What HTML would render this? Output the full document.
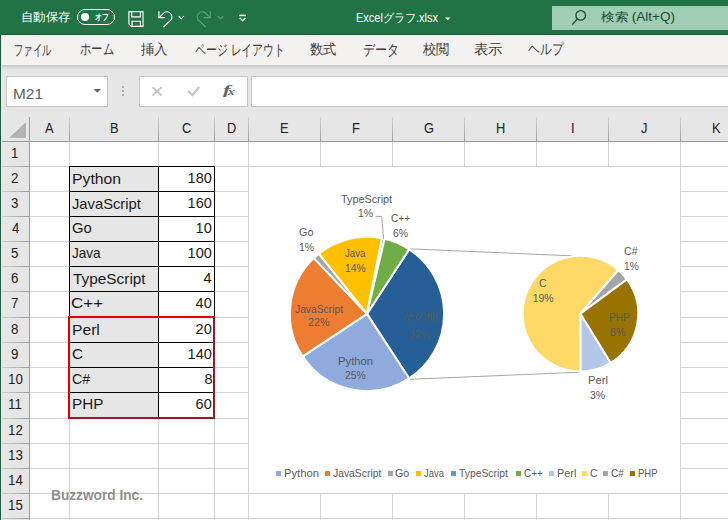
<!DOCTYPE html><html lang="ja"><head><meta charset="utf-8"><style>
*{margin:0;padding:0;box-sizing:border-box}
html,body{width:728px;height:520px;overflow:hidden;background:#fff;font-family:"Liberation Sans",sans-serif}
.a{position:absolute;white-space:nowrap}
</style></head><body>
<div class="a" style="left:0;top:0;width:728px;height:34px;background:#217346"></div>
<div class="a" style="left:20.52px;top:10.80px;font-size:12px;font-weight:normal;font-style:normal;font-family:'Liberation Sans',sans-serif;color:#fff;line-height:1;transform:scaleX(1.0400);transform-origin:0 0;">自動保存</div>
<div class="a" style="left:77px;top:9.2px;width:38px;height:15.6px;border:1.2px solid #fff;border-radius:8px"></div>
<div class="a" style="left:80.8px;top:12.7px;width:8.6px;height:8.6px;background:#fff;border-radius:50%"></div>
<div class="a" style="left:95.04px;top:13.40px;font-size:9px;font-weight:bold;font-style:normal;font-family:'Liberation Sans',sans-serif;color:#fff;line-height:1;transform:scaleX(0.7625);transform-origin:0 0;">オフ</div>
<svg class="a" style="left:0;top:0" width="728" height="35" viewBox="0 0 728 35">
<g fill="none" stroke="#fff" stroke-width="1.15" stroke-linejoin="miter">
<path d="M128.9 11.6 H143 V26.4 H131.3 L128.9 24 Z"/>
<path d="M131.7 11.6 V16.9 H140.4 V11.6"/>
<path d="M132 26.4 V21.2 H140.4 V26.4"/>
<path d="M158.9 11.2 V17.6 H165.3"/>
<path d="M158.9 17.6 L163.6 13.1 A5 5 0 0 1 170.7 20.1 L163.4 27"/>
<path d="M178.7 16.2 L181.3 18.8 L183.9 16.2"/>
</g>
<g fill="none" stroke="#5fa07b" stroke-width="1.15">
<path d="M210.2 11.2 V17.6 H203.8"/>
<path d="M210.2 17.6 L205.5 13.1 A5 5 0 0 0 198.4 20.1 L205.7 27"/>
<path d="M217.7 16.2 L220.5 18.8 L223.3 16.2"/>
</g>
<g fill="none" stroke="#fff" stroke-width="1.5">
<path d="M239 15.4 h7"/><path d="M239.7 18 l2.9 2.6 l2.9 -2.6"/>
</g>
<path d="M445 17.5 h5.5 l-2.75 2.8 z" fill="#fff"/>
</svg>
<div class="a" style="left:355.88px;top:11.50px;font-size:12px;font-weight:normal;font-style:normal;font-family:'Liberation Sans',sans-serif;color:#fff;line-height:1;transform:scaleX(0.9182);transform-origin:0 0;">Excelグラフ.xlsx</div>
<div class="a" style="left:552px;top:6px;width:176px;height:24px;background:#a0cdb3"></div>
<svg class="a" style="left:552px;top:6px" width="40" height="24"><g fill="none" stroke="#1d4f33" stroke-width="1.3"><circle cx="28.7" cy="9.4" r="4.8"/><path d="M25.3 13 L20.3 18.5"/></g></svg>
<div class="a" style="left:601.17px;top:10.80px;font-size:12px;font-weight:normal;font-style:normal;font-family:'Liberation Sans',sans-serif;color:#1e4a32;line-height:1;transform:scaleX(1.1250);transform-origin:0 0;">検索 (Alt+Q)</div>
<div class="a" style="left:0;top:34px;width:728px;height:31px;background:#f3f2f1"></div>
<div class="a" style="left:0;top:34px;width:728px;height:1px;background:#22583e"></div>
<div class="a" style="left:0;top:35px;width:728px;height:1px;background:#e6f5ec"></div>
<div class="a" style="left:0;top:65px;width:728px;height:455px;background:#e6e6e6"></div>
<div class="a" style="left:0;top:65px;width:728px;height:5px;background:linear-gradient(#cbcbcb,#e6e6e6)"></div>
<div class="a" style="left:14.05px;top:43.40px;font-size:14.5px;font-weight:normal;font-style:normal;font-family:'Liberation Sans',sans-serif;color:#3b3b3b;line-height:1;transform:scaleX(0.6241);transform-origin:0 0;">ファイル</div>
<div class="a" style="left:80.24px;top:42.40px;font-size:14.5px;font-weight:normal;font-style:normal;font-family:'Liberation Sans',sans-serif;color:#3b3b3b;line-height:1;transform:scaleX(0.7558);transform-origin:0 0;">ホーム</div>
<div class="a" style="left:141.00px;top:43.40px;font-size:13.5px;font-weight:normal;font-style:normal;font-family:'Liberation Sans',sans-serif;color:#3b3b3b;line-height:1;transform:scaleX(0.9630);transform-origin:0 0;">挿入</div>
<div class="a" style="left:194.88px;top:43.40px;font-size:14.5px;font-weight:normal;font-style:normal;font-family:'Liberation Sans',sans-serif;color:#3b3b3b;line-height:1;transform:scaleX(0.7244);transform-origin:0 0;">ページ レイアウト</div>
<div class="a" style="left:310.45px;top:43.40px;font-size:13.5px;font-weight:normal;font-style:normal;font-family:'Liberation Sans',sans-serif;color:#3b3b3b;line-height:1;transform:scaleX(0.9462);transform-origin:0 0;">数式</div>
<div class="a" style="left:362.59px;top:43.40px;font-size:14.5px;font-weight:normal;font-style:normal;font-family:'Liberation Sans',sans-serif;color:#3b3b3b;line-height:1;transform:scaleX(0.8025);transform-origin:0 0;">データ</div>
<div class="a" style="left:423.00px;top:43.40px;font-size:13.5px;font-weight:normal;font-style:normal;font-family:'Liberation Sans',sans-serif;color:#3b3b3b;line-height:1;transform:scaleX(0.9481);transform-origin:0 0;">校閲</div>
<div class="a" style="left:474.37px;top:43.40px;font-size:13.5px;font-weight:normal;font-style:normal;font-family:'Liberation Sans',sans-serif;color:#3b3b3b;line-height:1;transform:scaleX(1.0308);transform-origin:0 0;">表示</div>
<div class="a" style="left:528.21px;top:42.40px;font-size:14.5px;font-weight:normal;font-style:normal;font-family:'Liberation Sans',sans-serif;color:#3b3b3b;line-height:1;transform:scaleX(0.7857);transform-origin:0 0;">ヘルプ</div>
<div class="a" style="left:6px;top:76px;width:101.5px;height:31px;background:#fff;border:1px solid #c6c6c6"></div>
<div class="a" style="left:13.00px;top:85.80px;font-size:15.4px;font-weight:normal;font-style:normal;font-family:'Liberation Sans',sans-serif;color:#606060;line-height:1;">M21</div>
<svg class="a" style="left:92px;top:88px" width="10" height="6"><path d="M1.5 1 h7.5 l-3.75 3.8 z" fill="#666"/></svg>
<svg class="a" style="left:120px;top:83px" width="6" height="18"><g fill="#9a9a9a"><circle cx="3" cy="4" r="1"/><circle cx="3" cy="8" r="1"/><circle cx="3" cy="12" r="1"/></g></svg>
<div class="a" style="left:138.5px;top:76px;width:109px;height:31px;background:#fff;border:1px solid #c6c6c6"></div>
<svg class="a" style="left:138px;top:76px" width="110" height="30"><g fill="none" stroke="#c4c4c4" stroke-width="1.9"><path d="M14.6 11.2 l9 8.4 M23.6 11.2 l-9 8.4"/><path d="M50 15 L54.3 19.2 L61.2 11" stroke-width="2.2"/></g>
</svg>
<div class="a" style="left:223.20px;top:84.20px;font-size:12.8px;font-weight:bold;font-style:italic;font-family:'Liberation Serif',serif;color:#666;line-height:1;transform:scaleX(1.7600);transform-origin:0 0;">f</div>
<div class="a" style="left:228.40px;top:87.40px;font-size:10.5px;font-weight:bold;font-style:italic;font-family:'Liberation Serif',serif;color:#666;line-height:1;transform:scaleX(1.2600);transform-origin:0 0;">x</div>
<div class="a" style="left:251px;top:76px;width:480px;height:31px;background:#fff;border:1px solid #c6c6c6"></div>
<div class="a" style="left:29.5px;top:141.5px;width:700px;height:380px;background:#fff"></div>
<div class="a" style="left:69px;top:117px;width:1px;height:24px;background:linear-gradient(#d2d2d2,#9e9e9e)"></div>
<div class="a" style="left:69px;top:142px;width:1px;height:380px;background:#d4d4d4"></div>
<div class="a" style="left:45.30px;top:119.50px;font-size:15.3px;font-weight:normal;font-style:normal;font-family:'Liberation Sans',sans-serif;color:#222;line-height:1;transform:scaleX(0.8400);transform-origin:0 0;">A</div>
<div class="a" style="left:158px;top:117px;width:1px;height:24px;background:linear-gradient(#d2d2d2,#9e9e9e)"></div>
<div class="a" style="left:158px;top:142px;width:1px;height:380px;background:#d4d4d4"></div>
<div class="a" style="left:109.80px;top:119.50px;font-size:15.3px;font-weight:normal;font-style:normal;font-family:'Liberation Sans',sans-serif;color:#222;line-height:1;transform:scaleX(0.8400);transform-origin:0 0;">B</div>
<div class="a" style="left:214px;top:117px;width:1px;height:24px;background:linear-gradient(#d2d2d2,#9e9e9e)"></div>
<div class="a" style="left:214px;top:142px;width:1px;height:380px;background:#d4d4d4"></div>
<div class="a" style="left:181.88px;top:119.50px;font-size:15.3px;font-weight:normal;font-style:normal;font-family:'Liberation Sans',sans-serif;color:#222;line-height:1;transform:scaleX(0.8400);transform-origin:0 0;">C</div>
<div class="a" style="left:248px;top:117px;width:1px;height:24px;background:linear-gradient(#d2d2d2,#9e9e9e)"></div>
<div class="a" style="left:248px;top:142px;width:1px;height:380px;background:#d4d4d4"></div>
<div class="a" style="left:226.88px;top:119.50px;font-size:15.3px;font-weight:normal;font-style:normal;font-family:'Liberation Sans',sans-serif;color:#222;line-height:1;transform:scaleX(0.8400);transform-origin:0 0;">D</div>
<div class="a" style="left:320px;top:117px;width:1px;height:24px;background:linear-gradient(#d2d2d2,#9e9e9e)"></div>
<div class="a" style="left:320px;top:142px;width:1px;height:380px;background:#d4d4d4"></div>
<div class="a" style="left:279.90px;top:119.50px;font-size:15.3px;font-weight:normal;font-style:normal;font-family:'Liberation Sans',sans-serif;color:#222;line-height:1;transform:scaleX(0.8400);transform-origin:0 0;">E</div>
<div class="a" style="left:392px;top:117px;width:1px;height:24px;background:linear-gradient(#d2d2d2,#9e9e9e)"></div>
<div class="a" style="left:392px;top:142px;width:1px;height:380px;background:#d4d4d4"></div>
<div class="a" style="left:352.38px;top:119.50px;font-size:15.3px;font-weight:normal;font-style:normal;font-family:'Liberation Sans',sans-serif;color:#222;line-height:1;transform:scaleX(0.8400);transform-origin:0 0;">F</div>
<div class="a" style="left:464px;top:117px;width:1px;height:24px;background:linear-gradient(#d2d2d2,#9e9e9e)"></div>
<div class="a" style="left:464px;top:142px;width:1px;height:380px;background:#d4d4d4"></div>
<div class="a" style="left:423.58px;top:119.50px;font-size:15.3px;font-weight:normal;font-style:normal;font-family:'Liberation Sans',sans-serif;color:#222;line-height:1;transform:scaleX(0.8400);transform-origin:0 0;">G</div>
<div class="a" style="left:536px;top:117px;width:1px;height:24px;background:linear-gradient(#d2d2d2,#9e9e9e)"></div>
<div class="a" style="left:536px;top:142px;width:1px;height:380px;background:#d4d4d4"></div>
<div class="a" style="left:496.06px;top:119.50px;font-size:15.3px;font-weight:normal;font-style:normal;font-family:'Liberation Sans',sans-serif;color:#222;line-height:1;transform:scaleX(0.8400);transform-origin:0 0;">H</div>
<div class="a" style="left:608px;top:117px;width:1px;height:24px;background:linear-gradient(#d2d2d2,#9e9e9e)"></div>
<div class="a" style="left:608px;top:142px;width:1px;height:380px;background:#d4d4d4"></div>
<div class="a" style="left:571.05px;top:119.50px;font-size:15.3px;font-weight:normal;font-style:normal;font-family:'Liberation Sans',sans-serif;color:#222;line-height:1;transform:scaleX(0.8400);transform-origin:0 0;">I</div>
<div class="a" style="left:680px;top:117px;width:1px;height:24px;background:linear-gradient(#d2d2d2,#9e9e9e)"></div>
<div class="a" style="left:680px;top:142px;width:1px;height:380px;background:#d4d4d4"></div>
<div class="a" style="left:641.41px;top:119.50px;font-size:15.3px;font-weight:normal;font-style:normal;font-family:'Liberation Sans',sans-serif;color:#222;line-height:1;transform:scaleX(0.8400);transform-origin:0 0;">J</div>
<div class="a" style="left:752px;top:117px;width:1px;height:24px;background:linear-gradient(#d2d2d2,#9e9e9e)"></div>
<div class="a" style="left:752px;top:142px;width:1px;height:380px;background:#d4d4d4"></div>
<div class="a" style="left:712.20px;top:119.50px;font-size:15.3px;font-weight:normal;font-style:normal;font-family:'Liberation Sans',sans-serif;color:#222;line-height:1;transform:scaleX(0.8400);transform-origin:0 0;">K</div>
<div class="a" style="left:0;top:166px;width:29px;height:1px;background:linear-gradient(to right,#d0d0d0,#9e9e9e)"></div>
<div class="a" style="left:30px;top:166px;width:700px;height:1px;background:#d4d4d4"></div>
<div class="a" style="left:11.48px;top:144.80px;font-size:15.3px;font-weight:normal;font-style:normal;font-family:'Liberation Sans',sans-serif;color:#222;line-height:1;transform:scaleX(0.8700);transform-origin:0 0;">1</div>
<div class="a" style="left:0;top:191px;width:29px;height:1px;background:linear-gradient(to right,#d0d0d0,#9e9e9e)"></div>
<div class="a" style="left:30px;top:191px;width:700px;height:1px;background:#d4d4d4"></div>
<div class="a" style="left:11.48px;top:169.80px;font-size:15.3px;font-weight:normal;font-style:normal;font-family:'Liberation Sans',sans-serif;color:#222;line-height:1;transform:scaleX(0.8700);transform-origin:0 0;">2</div>
<div class="a" style="left:0;top:216px;width:29px;height:1px;background:linear-gradient(to right,#d0d0d0,#9e9e9e)"></div>
<div class="a" style="left:30px;top:216px;width:700px;height:1px;background:#d4d4d4"></div>
<div class="a" style="left:11.48px;top:194.80px;font-size:15.3px;font-weight:normal;font-style:normal;font-family:'Liberation Sans',sans-serif;color:#222;line-height:1;transform:scaleX(0.8700);transform-origin:0 0;">3</div>
<div class="a" style="left:0;top:241px;width:29px;height:1px;background:linear-gradient(to right,#d0d0d0,#9e9e9e)"></div>
<div class="a" style="left:30px;top:241px;width:700px;height:1px;background:#d4d4d4"></div>
<div class="a" style="left:11.92px;top:219.80px;font-size:15.3px;font-weight:normal;font-style:normal;font-family:'Liberation Sans',sans-serif;color:#222;line-height:1;transform:scaleX(0.8700);transform-origin:0 0;">4</div>
<div class="a" style="left:0;top:266px;width:29px;height:1px;background:linear-gradient(to right,#d0d0d0,#9e9e9e)"></div>
<div class="a" style="left:30px;top:266px;width:700px;height:1px;background:#d4d4d4"></div>
<div class="a" style="left:11.48px;top:244.80px;font-size:15.3px;font-weight:normal;font-style:normal;font-family:'Liberation Sans',sans-serif;color:#222;line-height:1;transform:scaleX(0.8700);transform-origin:0 0;">5</div>
<div class="a" style="left:0;top:291px;width:29px;height:1px;background:linear-gradient(to right,#d0d0d0,#9e9e9e)"></div>
<div class="a" style="left:30px;top:291px;width:700px;height:1px;background:#d4d4d4"></div>
<div class="a" style="left:11.48px;top:269.80px;font-size:15.3px;font-weight:normal;font-style:normal;font-family:'Liberation Sans',sans-serif;color:#222;line-height:1;transform:scaleX(0.8700);transform-origin:0 0;">6</div>
<div class="a" style="left:0;top:317px;width:29px;height:1px;background:linear-gradient(to right,#d0d0d0,#9e9e9e)"></div>
<div class="a" style="left:30px;top:317px;width:700px;height:1px;background:#d4d4d4"></div>
<div class="a" style="left:11.48px;top:294.80px;font-size:15.3px;font-weight:normal;font-style:normal;font-family:'Liberation Sans',sans-serif;color:#222;line-height:1;transform:scaleX(0.8700);transform-origin:0 0;">7</div>
<div class="a" style="left:0;top:342px;width:29px;height:1px;background:linear-gradient(to right,#d0d0d0,#9e9e9e)"></div>
<div class="a" style="left:30px;top:342px;width:700px;height:1px;background:#d4d4d4"></div>
<div class="a" style="left:11.48px;top:320.80px;font-size:15.3px;font-weight:normal;font-style:normal;font-family:'Liberation Sans',sans-serif;color:#222;line-height:1;transform:scaleX(0.8700);transform-origin:0 0;">8</div>
<div class="a" style="left:0;top:367px;width:29px;height:1px;background:linear-gradient(to right,#d0d0d0,#9e9e9e)"></div>
<div class="a" style="left:30px;top:367px;width:700px;height:1px;background:#d4d4d4"></div>
<div class="a" style="left:11.48px;top:345.80px;font-size:15.3px;font-weight:normal;font-style:normal;font-family:'Liberation Sans',sans-serif;color:#222;line-height:1;transform:scaleX(0.8700);transform-origin:0 0;">9</div>
<div class="a" style="left:0;top:392px;width:29px;height:1px;background:linear-gradient(to right,#d0d0d0,#9e9e9e)"></div>
<div class="a" style="left:30px;top:392px;width:700px;height:1px;background:#d4d4d4"></div>
<div class="a" style="left:8.01px;top:370.80px;font-size:15.3px;font-weight:normal;font-style:normal;font-family:'Liberation Sans',sans-serif;color:#222;line-height:1;transform:scaleX(0.8700);transform-origin:0 0;">10</div>
<div class="a" style="left:0;top:418px;width:29px;height:1px;background:linear-gradient(to right,#d0d0d0,#9e9e9e)"></div>
<div class="a" style="left:30px;top:418px;width:700px;height:1px;background:#d4d4d4"></div>
<div class="a" style="left:8.44px;top:395.80px;font-size:15.3px;font-weight:normal;font-style:normal;font-family:'Liberation Sans',sans-serif;color:#222;line-height:1;transform:scaleX(0.8700);transform-origin:0 0;">11</div>
<div class="a" style="left:0;top:443px;width:29px;height:1px;background:linear-gradient(to right,#d0d0d0,#9e9e9e)"></div>
<div class="a" style="left:30px;top:443px;width:700px;height:1px;background:#d4d4d4"></div>
<div class="a" style="left:8.01px;top:421.80px;font-size:15.3px;font-weight:normal;font-style:normal;font-family:'Liberation Sans',sans-serif;color:#222;line-height:1;transform:scaleX(0.8700);transform-origin:0 0;">12</div>
<div class="a" style="left:0;top:468px;width:29px;height:1px;background:linear-gradient(to right,#d0d0d0,#9e9e9e)"></div>
<div class="a" style="left:30px;top:468px;width:700px;height:1px;background:#d4d4d4"></div>
<div class="a" style="left:8.01px;top:446.80px;font-size:15.3px;font-weight:normal;font-style:normal;font-family:'Liberation Sans',sans-serif;color:#222;line-height:1;transform:scaleX(0.8700);transform-origin:0 0;">13</div>
<div class="a" style="left:0;top:493px;width:29px;height:1px;background:linear-gradient(to right,#d0d0d0,#9e9e9e)"></div>
<div class="a" style="left:30px;top:493px;width:700px;height:1px;background:#d4d4d4"></div>
<div class="a" style="left:7.57px;top:471.80px;font-size:15.3px;font-weight:normal;font-style:normal;font-family:'Liberation Sans',sans-serif;color:#222;line-height:1;transform:scaleX(0.8700);transform-origin:0 0;">14</div>
<div class="a" style="left:0;top:518px;width:29px;height:1px;background:linear-gradient(to right,#d0d0d0,#9e9e9e)"></div>
<div class="a" style="left:30px;top:518px;width:700px;height:1px;background:#d4d4d4"></div>
<div class="a" style="left:8.01px;top:496.80px;font-size:15.3px;font-weight:normal;font-style:normal;font-family:'Liberation Sans',sans-serif;color:#222;line-height:1;transform:scaleX(0.8700);transform-origin:0 0;">15</div>
<div class="a" style="left:0;top:34px;width:1px;height:486px;background:#24573f"></div>
<div class="a" style="left:1px;top:35px;width:1px;height:485px;background:#d5f3e4"></div>
<div class="a" style="left:29px;top:117px;width:1px;height:403px;background:#9b9b9b"></div>
<div class="a" style="left:1.5px;top:141px;width:727px;height:1px;background:#9b9b9b"></div>
<svg class="a" style="left:8px;top:121px" width="20" height="18"><path d="M18 1 V17 H1 Z" fill="#b3b3b3"/></svg>
<div class="a" style="left:70px;top:167px;width:88px;height:24px;background:#e7e6e6"></div>
<div class="a" style="left:71.51px;top:172.20px;font-size:14.5px;font-weight:normal;font-style:normal;font-family:'Liberation Sans',sans-serif;color:#1a1a1a;line-height:1;transform:scaleX(1.0860);transform-origin:0 0;">Python</div>
<div class="a" style="left:187.60px;top:171.20px;font-size:14.5px;font-weight:normal;font-style:normal;font-family:'Liberation Sans',sans-serif;color:#1a1a1a;line-height:1;">180</div>
<div class="a" style="left:70px;top:192px;width:88px;height:24px;background:#e7e6e6"></div>
<div class="a" style="left:71.58px;top:197.20px;font-size:14.5px;font-weight:normal;font-style:normal;font-family:'Liberation Sans',sans-serif;color:#1a1a1a;line-height:1;transform:scaleX(1.0164);transform-origin:0 0;">JavaScript</div>
<div class="a" style="left:187.60px;top:196.20px;font-size:14.5px;font-weight:normal;font-style:normal;font-family:'Liberation Sans',sans-serif;color:#1a1a1a;line-height:1;">160</div>
<div class="a" style="left:70px;top:217px;width:88px;height:24px;background:#e7e6e6"></div>
<div class="a" style="left:71.58px;top:221.20px;font-size:14.5px;font-weight:normal;font-style:normal;font-family:'Liberation Sans',sans-serif;color:#1a1a1a;line-height:1;transform:scaleX(1.0222);transform-origin:0 0;">Go</div>
<div class="a" style="left:195.60px;top:221.20px;font-size:14.5px;font-weight:normal;font-style:normal;font-family:'Liberation Sans',sans-serif;color:#1a1a1a;line-height:1;">10</div>
<div class="a" style="left:70px;top:242px;width:88px;height:24px;background:#e7e6e6"></div>
<div class="a" style="left:71.67px;top:246.20px;font-size:14.5px;font-weight:normal;font-style:normal;font-family:'Liberation Sans',sans-serif;color:#1a1a1a;line-height:1;transform:scaleX(0.9333);transform-origin:0 0;">Java</div>
<div class="a" style="left:187.60px;top:246.20px;font-size:14.5px;font-weight:normal;font-style:normal;font-family:'Liberation Sans',sans-serif;color:#1a1a1a;line-height:1;">100</div>
<div class="a" style="left:70px;top:267px;width:88px;height:24px;background:#e7e6e6"></div>
<div class="a" style="left:72.60px;top:272.20px;font-size:14.5px;font-weight:normal;font-style:normal;font-family:'Liberation Sans',sans-serif;color:#1a1a1a;line-height:1;transform:scaleX(1.0603);transform-origin:0 0;">TypeScript</div>
<div class="a" style="left:203.60px;top:271.20px;font-size:14.5px;font-weight:normal;font-style:normal;font-family:'Liberation Sans',sans-serif;color:#1a1a1a;line-height:1;">4</div>
<div class="a" style="left:70px;top:292px;width:88px;height:25px;background:#e7e6e6"></div>
<div class="a" style="left:71.43px;top:296.20px;font-size:14.5px;font-weight:normal;font-style:normal;font-family:'Liberation Sans',sans-serif;color:#1a1a1a;line-height:1;transform:scaleX(1.1692);transform-origin:0 0;">C++</div>
<div class="a" style="left:195.60px;top:296.20px;font-size:14.5px;font-weight:normal;font-style:normal;font-family:'Liberation Sans',sans-serif;color:#1a1a1a;line-height:1;">40</div>
<div class="a" style="left:70px;top:318px;width:88px;height:24px;background:#e7e6e6"></div>
<div class="a" style="left:71.52px;top:323.20px;font-size:14.5px;font-weight:normal;font-style:normal;font-family:'Liberation Sans',sans-serif;color:#1a1a1a;line-height:1;transform:scaleX(1.0792);transform-origin:0 0;">Perl</div>
<div class="a" style="left:195.60px;top:322.20px;font-size:14.5px;font-weight:normal;font-style:normal;font-family:'Liberation Sans',sans-serif;color:#1a1a1a;line-height:1;">20</div>
<div class="a" style="left:70px;top:343px;width:88px;height:24px;background:#e7e6e6"></div>
<div class="a" style="left:71.56px;top:347.20px;font-size:14.5px;font-weight:normal;font-style:normal;font-family:'Liberation Sans',sans-serif;color:#1a1a1a;line-height:1;transform:scaleX(1.0444);transform-origin:0 0;">C</div>
<div class="a" style="left:187.60px;top:347.20px;font-size:14.5px;font-weight:normal;font-style:normal;font-family:'Liberation Sans',sans-serif;color:#1a1a1a;line-height:1;">140</div>
<div class="a" style="left:70px;top:368px;width:88px;height:24px;background:#e7e6e6"></div>
<div class="a" style="left:71.63px;top:372.20px;font-size:14.5px;font-weight:normal;font-style:normal;font-family:'Liberation Sans',sans-serif;color:#1a1a1a;line-height:1;transform:scaleX(0.9722);transform-origin:0 0;">C#</div>
<div class="a" style="left:204.60px;top:372.20px;font-size:14.5px;font-weight:normal;font-style:normal;font-family:'Liberation Sans',sans-serif;color:#1a1a1a;line-height:1;">8</div>
<div class="a" style="left:70px;top:393px;width:88px;height:25px;background:#e7e6e6"></div>
<div class="a" style="left:71.55px;top:397.20px;font-size:14.5px;font-weight:normal;font-style:normal;font-family:'Liberation Sans',sans-serif;color:#1a1a1a;line-height:1;transform:scaleX(1.0500);transform-origin:0 0;">PHP</div>
<div class="a" style="left:195.60px;top:397.20px;font-size:14.5px;font-weight:normal;font-style:normal;font-family:'Liberation Sans',sans-serif;color:#1a1a1a;line-height:1;">60</div>
<div class="a" style="left:69px;top:166px;width:146px;height:1px;background:#000"></div>
<div class="a" style="left:69px;top:191px;width:146px;height:1px;background:#000"></div>
<div class="a" style="left:69px;top:216px;width:146px;height:1px;background:#000"></div>
<div class="a" style="left:69px;top:241px;width:146px;height:1px;background:#000"></div>
<div class="a" style="left:69px;top:266px;width:146px;height:1px;background:#000"></div>
<div class="a" style="left:69px;top:291px;width:146px;height:1px;background:#000"></div>
<div class="a" style="left:69px;top:317px;width:146px;height:1px;background:#000"></div>
<div class="a" style="left:69px;top:342px;width:146px;height:1px;background:#000"></div>
<div class="a" style="left:69px;top:367px;width:146px;height:1px;background:#000"></div>
<div class="a" style="left:69px;top:392px;width:146px;height:1px;background:#000"></div>
<div class="a" style="left:69px;top:418px;width:146px;height:1px;background:#000"></div>
<div class="a" style="left:69px;top:166px;width:1px;height:253px;background:#000"></div>
<div class="a" style="left:158px;top:166px;width:1px;height:253px;background:#000"></div>
<div class="a" style="left:214px;top:166px;width:1px;height:253px;background:#000"></div>
<div class="a" style="left:68px;top:316px;width:147px;height:2px;background:#e00000"></div>
<div class="a" style="left:68px;top:316px;width:2px;height:103px;background:#e00000"></div>
<div class="a" style="left:68px;top:417px;width:147px;height:2px;background:#9a1b1b"></div>
<div class="a" style="left:213px;top:316px;width:2px;height:103px;background:#9a1b1b"></div>
<div class="a" style="left:50.82px;top:487.80px;font-size:14px;font-weight:bold;font-style:normal;font-family:'Liberation Sans',sans-serif;color:rgba(118,118,118,0.82);line-height:1;transform:scaleX(0.9772);transform-origin:0 0;">Buzzword Inc.</div>
<div class="a" style="left:248px;top:166px;width:433px;height:328px;background:#fff;border:1px solid #d4d4d4"></div>
<svg class="a" style="left:0;top:0" width="728" height="520" viewBox="0 0 728 520">
<line x1="409" y1="248.8" x2="580.5" y2="256.2" stroke="#a6a6a6" stroke-width="1"/>
<line x1="410" y1="379.3" x2="580.5" y2="372.2" stroke="#a6a6a6" stroke-width="1"/>
<path d="M367.00 313.90 L409.17 249.35 A77.1 77.1 0 0 1 409.17 378.45 Z" fill="#265f95" stroke="#fff" stroke-width="2" stroke-linejoin="round"/>
<path d="M367.00 313.90 L409.17 378.45 A77.1 77.1 0 0 1 302.64 356.35 Z" fill="#8faadc" stroke="#fff" stroke-width="2" stroke-linejoin="round"/>
<path d="M367.00 313.90 L302.64 356.35 A77.1 77.1 0 0 1 313.80 258.09 Z" fill="#ed7d31" stroke="#fff" stroke-width="2" stroke-linejoin="round"/>
<path d="M367.00 313.90 L313.80 258.09 A77.1 77.1 0 0 1 318.85 253.68 Z" fill="#a5a5a5" stroke="#fff" stroke-width="2" stroke-linejoin="round"/>
<path d="M367.00 313.90 L318.85 253.68 A77.1 77.1 0 0 1 382.00 238.27 Z" fill="#ffc000" stroke="#fff" stroke-width="2" stroke-linejoin="round"/>
<path d="M367.00 313.90 L382.00 238.27 A77.1 77.1 0 0 1 384.62 238.84 Z" fill="#5b9bd5" stroke="#fff" stroke-width="2" stroke-linejoin="round"/>
<path d="M367.00 313.90 L384.62 238.84 A77.1 77.1 0 0 1 409.17 249.35 Z" fill="#70ad47" stroke="#fff" stroke-width="2" stroke-linejoin="round"/>
<path d="M580.40 313.60 L610.67 362.84 A57.8 57.8 0 0 1 580.40 371.40 Z" fill="#b4c7e7" stroke="#fff" stroke-width="2" stroke-linejoin="round"/>
<path d="M580.40 313.60 L580.40 371.40 A57.8 57.8 0 1 1 618.36 270.01 Z" fill="#ffd966" stroke="#fff" stroke-width="2" stroke-linejoin="round"/>
<path d="M580.40 313.60 L618.36 270.01 A57.8 57.8 0 0 1 626.97 279.37 Z" fill="#a5a5a5" stroke="#fff" stroke-width="2" stroke-linejoin="round"/>
<path d="M580.40 313.60 L626.97 279.37 A57.8 57.8 0 0 1 610.67 362.84 Z" fill="#997300" stroke="#fff" stroke-width="2" stroke-linejoin="round"/>
<path d="M375.4 216.4 H381.7 L383.6 239" fill="none" stroke="#a6a6a6" stroke-width="1"/>
</svg>
<div class="a" style="left:340.50px;top:193.60px;font-size:10.5px;font-weight:normal;font-style:normal;font-family:'Liberation Sans',sans-serif;color:#595959;line-height:1;transform:scaleX(1.0306);transform-origin:0 0;">TypeScript</div>
<div class="a" style="left:358.01px;top:208.40px;font-size:10.5px;font-weight:normal;font-style:normal;font-family:'Liberation Sans',sans-serif;color:#595959;line-height:1;transform:scaleX(0.9929);transform-origin:0 0;">1%</div>
<div class="a" style="left:391.44px;top:213.40px;font-size:10.5px;font-weight:normal;font-style:normal;font-family:'Liberation Sans',sans-serif;color:#595959;line-height:1;transform:scaleX(0.9611);transform-origin:0 0;">C++</div>
<div class="a" style="left:393.00px;top:228.20px;font-size:10.5px;font-weight:normal;font-style:normal;font-family:'Liberation Sans',sans-serif;color:#595959;line-height:1;">6%</div>
<div class="a" style="left:298.57px;top:227.00px;font-size:10.5px;font-weight:normal;font-style:normal;font-family:'Liberation Sans',sans-serif;color:#595959;line-height:1;transform:scaleX(1.0308);transform-origin:0 0;">Go</div>
<div class="a" style="left:298.61px;top:242.00px;font-size:10.5px;font-weight:normal;font-style:normal;font-family:'Liberation Sans',sans-serif;color:#595959;line-height:1;transform:scaleX(0.9929);transform-origin:0 0;">1%</div>
<div class="a" style="left:344.80px;top:248.30px;font-size:10.5px;font-weight:normal;font-style:normal;font-family:'Liberation Sans',sans-serif;color:#595959;line-height:1;transform:scaleX(0.9182);transform-origin:0 0;">Java</div>
<div class="a" style="left:344.82px;top:263.00px;font-size:10.5px;font-weight:normal;font-style:normal;font-family:'Liberation Sans',sans-serif;color:#595959;line-height:1;transform:scaleX(0.9800);transform-origin:0 0;">14%</div>
<div class="a" style="left:295.00px;top:303.50px;font-size:10.5px;font-weight:normal;font-style:normal;font-family:'Liberation Sans',sans-serif;color:#595959;line-height:1;transform:scaleX(0.9796);transform-origin:0 0;">JavaScript</div>
<div class="a" style="left:308.18px;top:317.40px;font-size:10.5px;font-weight:normal;font-style:normal;font-family:'Liberation Sans',sans-serif;color:#595959;line-height:1;transform:scaleX(1.0200);transform-origin:0 0;">22%</div>
<div class="a" style="left:337.53px;top:356.30px;font-size:10.5px;font-weight:normal;font-style:normal;font-family:'Liberation Sans',sans-serif;color:#595959;line-height:1;transform:scaleX(1.0742);transform-origin:0 0;">Python</div>
<div class="a" style="left:344.61px;top:370.00px;font-size:10.5px;font-weight:normal;font-style:normal;font-family:'Liberation Sans',sans-serif;color:#595959;line-height:1;transform:scaleX(0.9900);transform-origin:0 0;">25%</div>
<div class="a" style="left:402.95px;top:310.80px;font-size:10.5px;font-weight:normal;font-style:normal;font-family:'Liberation Sans',sans-serif;color:#595959;line-height:1;transform:scaleX(1.0500);transform-origin:0 0;">その他</div>
<div class="a" style="left:408.71px;top:328.60px;font-size:10.5px;font-weight:normal;font-style:normal;font-family:'Liberation Sans',sans-serif;color:#595959;line-height:1;transform:scaleX(0.9850);transform-origin:0 0;">32%</div>
<div class="a" style="left:624.39px;top:245.70px;font-size:10.5px;font-weight:normal;font-style:normal;font-family:'Liberation Sans',sans-serif;color:#595959;line-height:1;transform:scaleX(1.0083);transform-origin:0 0;">C#</div>
<div class="a" style="left:624.04px;top:260.50px;font-size:10.5px;font-weight:normal;font-style:normal;font-family:'Liberation Sans',sans-serif;color:#595959;line-height:1;transform:scaleX(0.9643);transform-origin:0 0;">1%</div>
<div class="a" style="left:539.38px;top:278.40px;font-size:10.5px;font-weight:normal;font-style:normal;font-family:'Liberation Sans',sans-serif;color:#595959;line-height:1;transform:scaleX(1.0167);transform-origin:0 0;">C</div>
<div class="a" style="left:532.70px;top:293.40px;font-size:10.5px;font-weight:normal;font-style:normal;font-family:'Liberation Sans',sans-serif;color:#595959;line-height:1;">19%</div>
<div class="a" style="left:608.64px;top:311.70px;font-size:10.5px;font-weight:normal;font-style:normal;font-family:'Liberation Sans',sans-serif;color:#595959;line-height:1;transform:scaleX(0.9600);transform-origin:0 0;">PHP</div>
<div class="a" style="left:610.46px;top:326.50px;font-size:10.5px;font-weight:normal;font-style:normal;font-family:'Liberation Sans',sans-serif;color:#595959;line-height:1;transform:scaleX(1.0357);transform-origin:0 0;">8%</div>
<div class="a" style="left:587.68px;top:375.30px;font-size:10.5px;font-weight:normal;font-style:normal;font-family:'Liberation Sans',sans-serif;color:#595959;line-height:1;transform:scaleX(1.0735);transform-origin:0 0;">Perl</div>
<div class="a" style="left:589.71px;top:389.80px;font-size:10.5px;font-weight:normal;font-style:normal;font-family:'Liberation Sans',sans-serif;color:#595959;line-height:1;transform:scaleX(0.9929);transform-origin:0 0;">3%</div>
<div class="a" style="left:276px;top:471px;width:5px;height:5px;background:#8faadc"></div>
<div class="a" style="left:283.83px;top:467.90px;font-size:10.5px;font-weight:normal;font-style:normal;font-family:'Liberation Sans',sans-serif;color:#595959;line-height:1;transform:scaleX(1.0710);transform-origin:0 0;">Python</div>
<div class="a" style="left:325px;top:471px;width:5px;height:5px;background:#ed7d31"></div>
<div class="a" style="left:333.00px;top:467.90px;font-size:10.5px;font-weight:normal;font-style:normal;font-family:'Liberation Sans',sans-serif;color:#595959;line-height:1;transform:scaleX(0.9857);transform-origin:0 0;">JavaScript</div>
<div class="a" style="left:388px;top:471px;width:5px;height:5px;background:#a5a5a5"></div>
<div class="a" style="left:395.48px;top:467.90px;font-size:10.5px;font-weight:normal;font-style:normal;font-family:'Liberation Sans',sans-serif;color:#595959;line-height:1;transform:scaleX(1.0154);transform-origin:0 0;">Go</div>
<div class="a" style="left:416px;top:471px;width:5px;height:5px;background:#ffc000"></div>
<div class="a" style="left:424.00px;top:467.90px;font-size:10.5px;font-weight:normal;font-style:normal;font-family:'Liberation Sans',sans-serif;color:#595959;line-height:1;transform:scaleX(0.8955);transform-origin:0 0;">Java</div>
<div class="a" style="left:451px;top:471px;width:5px;height:5px;background:#5b9bd5"></div>
<div class="a" style="left:458.70px;top:467.90px;font-size:10.5px;font-weight:normal;font-style:normal;font-family:'Liberation Sans',sans-serif;color:#595959;line-height:1;transform:scaleX(0.9857);transform-origin:0 0;">TypeScript</div>
<div class="a" style="left:516px;top:471px;width:5px;height:5px;background:#70ad47"></div>
<div class="a" style="left:524.35px;top:467.90px;font-size:10.5px;font-weight:normal;font-style:normal;font-family:'Liberation Sans',sans-serif;color:#595959;line-height:1;transform:scaleX(0.9500);transform-origin:0 0;">C++</div>
<div class="a" style="left:549px;top:471px;width:5px;height:5px;background:#b4c7e7"></div>
<div class="a" style="left:556.66px;top:467.90px;font-size:10.5px;font-weight:normal;font-style:normal;font-family:'Liberation Sans',sans-serif;color:#595959;line-height:1;transform:scaleX(1.0353);transform-origin:0 0;">Perl</div>
<div class="a" style="left:582px;top:471px;width:5px;height:5px;background:#ffd966"></div>
<div class="a" style="left:590.00px;top:467.90px;font-size:10.5px;font-weight:normal;font-style:normal;font-family:'Liberation Sans',sans-serif;color:#595959;line-height:1;">C</div>
<div class="a" style="left:603px;top:471px;width:5px;height:5px;background:#a5a5a5"></div>
<div class="a" style="left:610.94px;top:467.90px;font-size:10.5px;font-weight:normal;font-style:normal;font-family:'Liberation Sans',sans-serif;color:#595959;line-height:1;transform:scaleX(0.9583);transform-origin:0 0;">C#</div>
<div class="a" style="left:630px;top:471px;width:5px;height:5px;background:#997300"></div>
<div class="a" style="left:637.89px;top:467.90px;font-size:10.5px;font-weight:normal;font-style:normal;font-family:'Liberation Sans',sans-serif;color:#595959;line-height:1;transform:scaleX(0.9050);transform-origin:0 0;">PHP</div>
</body></html>
